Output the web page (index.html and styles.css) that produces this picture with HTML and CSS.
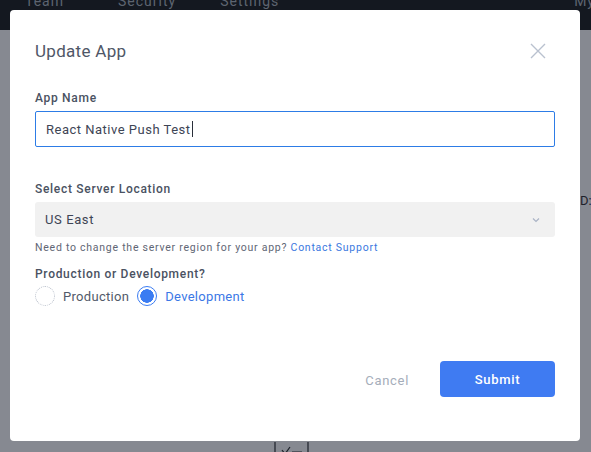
FILE: index.html
```html
<!DOCTYPE html>
<html>
<head>
<meta charset="utf-8">
<link rel="stylesheet" href="styles.css">
</head>
<body>
<div class="page">
  <header class="topbar">
    <nav class="nav">
      <span class="nav-item n1">Team</span>
      <span class="nav-item n2">Security</span>
      <span class="nav-item n3">Settings</span>
    </nav>
    <span class="nav-item my">My</span>
  </header>
  <main class="backdrop">
    <span class="bg-text">D:</span>
    <span class="bg-check"><svg width="36" height="14" viewBox="0 0 36 14"><path d="M1 0v14M8 8l3 4 5-7M18 10h10M34 0v14" stroke="#1d212a" stroke-width="1.2" fill="none"/></svg></span>
  </main>

  <div class="modal">
    <div class="modal-head">
      <h1 class="title">Update App</h1>
      <button class="close" aria-label="Close">
        <svg width="16" height="16" viewBox="0 0 16 16"><path d="M1 1L15 15M15 1L1 15" stroke="#b9c1cf" stroke-width="1.4" fill="none"/></svg>
      </button>
    </div>

    <div class="field field-name">
      <label class="label">App Name</label>
      <div class="input"><span>React Native Push Test</span><span class="caret"></span></div>
    </div>

    <div class="field field-select">
      <label class="label">Select Server Location</label>
      <div class="select">
        <span>US East</span>
        <svg class="chev" width="8" height="6" viewBox="0 0 8 6"><path d="M1 1.5L4 4.5L7 1.5" stroke="#aab3c5" stroke-width="1.2" fill="none"/></svg>
      </div>
      <p class="help">Need to change the server region for your app? <a class="link">Contact Support</a></p>
    </div>

    <div class="field field-radio">
      <label class="label">Production or Development?</label>
      <div class="radios">
        <span class="radio"><span class="dot off"></span><span class="rtext">Production</span></span>
        <span class="radio on"><span class="dot sel"></span><span class="rtext">Development</span></span>
      </div>
    </div>

    <div class="actions">
      <button class="cancel">Cancel</button>
      <button class="submit">Submit</button>
    </div>
  </div>
</div>
</body>
</html>
```

FILE: styles.css
```css
* { box-sizing: border-box; }
html, body { margin: 0; padding: 0; }
body {
  width: 591px;
  height: 452px;
  overflow: hidden;
  font-family: Roboto, "Noto Sans", sans-serif;
  background: #868991;
}
.page {
  position: relative;
  width: 591px;
  height: 452px;
  display: flex;
  flex-direction: column;
}
.topbar {
  height: 30px;
  background: #141820;
  display: flex;
  justify-content: space-between;
  align-items: flex-start;
  color: #5d6470;
  font-size: 14px;
  letter-spacing: 1px;
}
.nav { display: flex; }
.nav-item { display: block; line-height: 14px; margin-top: -6px; }
.n1 { margin-left: 25px; }
.n2 { margin-left: 54px; }
.n3 { margin-left: 44px; }
.my { margin-right: -4px; }
.backdrop {
  flex: 1;
  position: relative;
  background: #868991;
}
.bg-text {
  position: absolute;
  left: 580px;
  top: 163px;
  font-size: 13px;
  color: #1d212a;
}
.bg-check {
  position: absolute;
  left: 274px;
  top: 411px;
}
.modal {
  position: absolute;
  left: 10px;
  top: 10px;
  width: 570px;
  height: 431px;
  background: #fff;
  border-radius: 4px;
  padding: 0 25px;
  display: flex;
  flex-direction: column;
}
.modal-head {
  display: flex;
  justify-content: space-between;
  align-items: center;
  padding-top: 29px;
  height: 52px;
}
.title {
  margin: 0;
  font-size: 17px;
  font-weight: 400;
  color: #4f5767;
  letter-spacing: 0.3px;
  line-height: 22px;
}
.close {
  border: 0;
  background: none;
  padding: 0;
  margin-right: 9px;
  margin-top: 1px;
  width: 16px;
  height: 16px;
  display: flex;
}
.field { display: flex; flex-direction: column; }
.label {
  font-size: 12px;
  font-weight: 500;
  color: #4a5262;
  letter-spacing: 0.7px;
  line-height: 16px;
}
.field-name { margin-top: 28px; }
.field .label + * { margin-top: 5px; }
.input {
  height: 36px;
  border: 1px solid #2d7ce6;
  border-radius: 2px;
  padding: 0 10px;
  display: flex;
  align-items: center;
  font-size: 13px;
  letter-spacing: 0.5px;
  color: #3e4555;
}
.caret {
  display: inline-block;
  width: 1px;
  height: 16px;
  background: #2a2f3a;
  margin-left: 1px;
}
.field-select { margin-top: 34px; }
.select {
  height: 35px;
  background: #f1f1f1;
  border-radius: 3px;
  padding: 0 10px;
  display: flex;
  align-items: center;
  justify-content: space-between;
  font-size: 13px;
  letter-spacing: 0.6px;
  color: #3e4555;
}
.chev { margin-right: 5px; }
.help {
  margin: 4px 0 0;
  font-size: 10.5px;
  letter-spacing: 0.75px;
  color: #5f6675;
  line-height: 14px;
}
.link { color: #3a78e0; }
.field-radio { margin-top: 11px; }
.radios {
  display: flex;
  align-items: center;
  gap: 8px;
}
.field-radio .radios { margin-top: 4px; }
.radio { display: flex; align-items: center; gap: 8px; }
.dot {
  width: 20px;
  height: 20px;
  border-radius: 50%;
  flex: none;
}
.dot.off { border: 1px dotted #b5bcc8; }
.dot.sel {
  border: 1.5px solid #3b7cf2;
  background: radial-gradient(circle, #3b7cf2 0 6.5px, #fff 7px);
}
.rtext {
  font-size: 13px;
  letter-spacing: 0.3px;
  color: #525a69;
}
.on .rtext { color: #3b78e6; }
.actions {
  margin-top: auto;
  margin-bottom: 44px;
  display: flex;
  justify-content: flex-end;
  align-items: center;
}
.cancel {
  border: 0;
  background: none;
  font-family: inherit;
  font-size: 13px;
  letter-spacing: 0.7px;
  color: #a5adba;
  padding: 0;
  margin-right: 31px;
  margin-top: 2px;
}
.submit {
  width: 115px;
  height: 36px;
  border: 0;
  border-radius: 4px;
  background: #3f7bf2;
  color: #fff;
  font-family: inherit;
  font-size: 13px;
  font-weight: 500;
  letter-spacing: 0.7px;
}
```
